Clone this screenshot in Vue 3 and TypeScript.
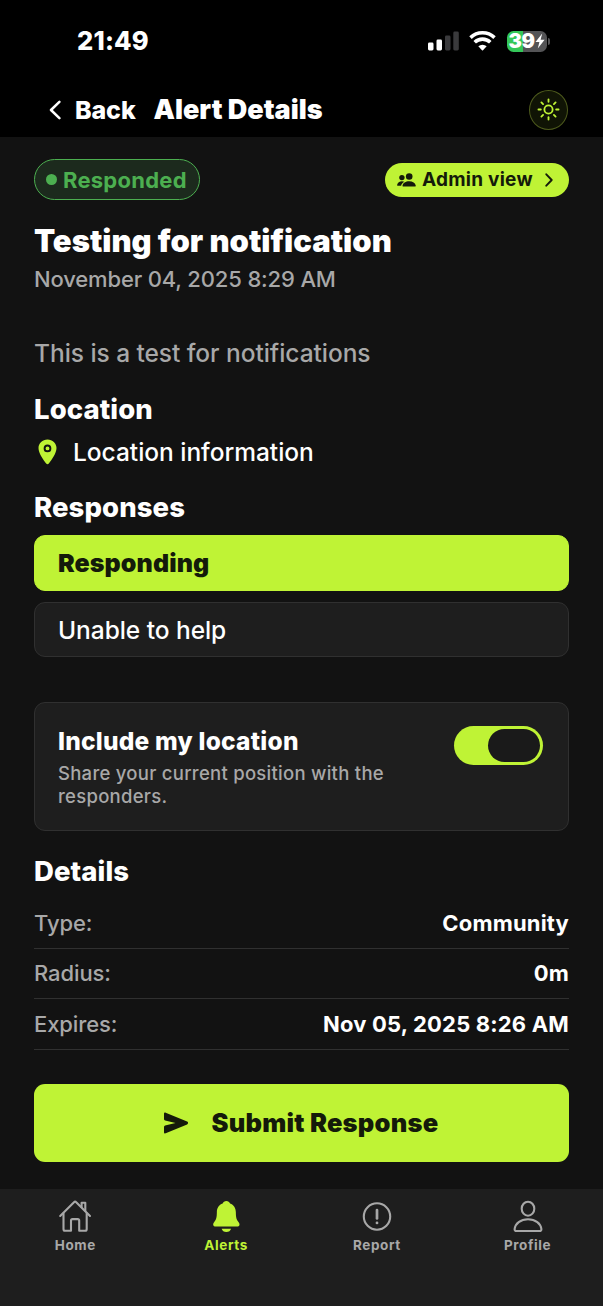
<script setup lang="ts">
import { ref } from 'vue'

interface Detail {
  label: string
  value: string
}

const details: Detail[] = [
  { label: 'Type:', value: 'Community' },
  { label: 'Radius:', value: '0m' },
  { label: 'Expires:', value: 'Nov 05, 2025 8:26 AM' },
]

const options: string[] = ['Responding', 'Unable to help']
const selected = ref<string>('Responding')
const includeLocation = ref<boolean>(true)

const tabs: string[] = ['Home', 'Alerts', 'Report', 'Profile']
const activeTab = ref<string>('Alerts')

const rays: number[] = [0, 45, 90, 135, 180, 225, 270, 315]
</script>

<template>
  <div class="screen">
    <div class="status">
      <span class="clock">21:49</span>
      <div class="indicators">
        <svg class="signal" viewBox="0 0 31 20">
          <rect x="0" y="11.5" width="5.5" height="8" rx="1.4" fill="#fff" />
          <rect x="8.5" y="8.5" width="5.5" height="11" rx="1.4" fill="#fff" />
          <rect x="17" y="4.5" width="5.5" height="15" rx="1.4" fill="#3a3a3c" />
          <rect x="25.3" y="0.5" width="5.5" height="19" rx="1.4" fill="#3a3a3c" />
        </svg>
        <svg class="wifi" viewBox="0 0 27 20">
          <path d="M1.5 6.6a17.400 17.400 0 0 1 24 0" />
          <path d="M5.7 11.2a11.300 11.300 0 0 1 15.600 0" />
          <path class="wedge" d="M9.300 15.300a6.400 6.400 0 0 1 8.400 0L14 19.300q-.5.5-1 0z" />
        </svg>
        <div class="battery">
          <span class="level">39</span>
          <svg class="bolt" viewBox="0 0 10 16"><path d="M7.200.6L.5 9.100h3.900L2.800 15.400 9.600 6.800H5.600z" /></svg>
        </div>
        <span class="nub"></span>
      </div>
    </div>

    <header class="header">
      <button class="back">
        <svg viewBox="0 0 12 20"><path d="M10.4 1.8L2 10l8.400 8.200" /></svg>
        <span>Back</span>
      </button>
      <h1>Alert Details</h1>
      <button class="theme">
        <svg viewBox="0 0 24 24">
          <circle cx="12" cy="12" r="4.3" />
          <path v-for="r in rays" :key="r" d="M12 1.5v2.500" :transform="`rotate(${r} 12 12)`" />
        </svg>
      </button>
    </header>

    <main class="content">
      <div class="badges">
        <div class="responded"><i></i><span>Responded</span></div>
        <button class="admin">
          <svg class="people" viewBox="0 0 19 14">
            <circle cx="12.2" cy="3.5" r="3.3" />
            <path d="M6 13.6c-.4 0-.6-.4-.5-.8.5-2.8 3.2-4.5 6.7-4.5s6.1 1.7 6.6 4.5c.1.4-.2.8-.6.8z" />
            <circle cx="4.9" cy="4.6" r="2.7" />
            <path d="M7.4 8.7C5.6 9.700 4.400 11 4.100 12.700H.6c-.4 0-.6-.3-.5-.6.4-2.400 2.400-3.900 4.900-3.900.9 0 1.700.2 2.400.5z" />
          </svg>
          <span>Admin view</span>
          <svg class="chevron" viewBox="0 0 8 14"><path d="M1.300 1.300L6.700 7l-5.400 5.700" /></svg>
        </button>
      </div>

      <h2 class="title">Testing for notification</h2>
      <p class="date">November 04, 2025 8:29 AM</p>
      <p class="message">This is a test for notifications</p>

      <h3 class="section loc-head">Location</h3>
      <div class="location">
        <svg viewBox="0 0 19 26">
          <path d="M9.500.5C4.500.5.500 4.300.500 9.100c0 5.200 4.700 11.800 7.700 15.500.7.900 1.900.9 2.600 0 3-3.700 7.700-10.300 7.700-15.500C18.500 4.300 14.500.5 9.500.5z" />
          <circle cx="9.500" cy="9.400" r="2.900" />
        </svg>
        <span>Location information</span>
      </div>

      <h3 class="section resp-head">Responses</h3>
      <div class="options">
        <button
          v-for="o in options"
          :key="o"
          class="option"
          :class="{ chosen: o === selected }"
          @click="selected = o"
        ><span>{{ o }}</span></button>
      </div>

      <div class="share">
        <div class="share-text">
          <strong>Include my location</strong>
          <p>Share your current position with the responders.</p>
        </div>
        <button class="switch" :class="{ on: includeLocation }" @click="includeLocation = !includeLocation"><i></i></button>
      </div>

      <h3 class="section det-head">Details</h3>
      <dl class="details">
        <div v-for="d in details" :key="d.label" class="row">
          <dt>{{ d.label }}</dt>
          <dd>{{ d.value }}</dd>
        </div>
      </dl>

      <button class="submit">
        <svg viewBox="0 0 26 22">
          <path d="M1 1.800C1 .8 1.800.3 2.700.7l21.400 8.900c1.300.6 1.300 2.200 0 2.800L2.700 21.300C1.800 21.700 1 21.200 1 20.200v-5.300c0-.7.400-1.200 1.100-1.400L12.500 11 2.100 8.500C1.400 8.300 1 7.800 1 7.100z" />
        </svg>
        <span>Submit Response</span>
      </button>
    </main>

    <nav class="tabs">
      <button v-for="t in tabs" :key="t" class="tab" :class="{ active: t === activeTab }" @click="activeTab = t">
        <svg v-if="t === 'Home'" viewBox="0 0 34 34">
          <path d="M2.200 17L16 3.200c.7-.7 1.500-.7 2.200 0L32 17" />
          <path d="M5.500 14.500v15.700c0 .9.600 1.500 1.500 1.500h6V21.600c0-.9.600-1.500 1.500-1.500h5.200c.9 0 1.500.6 1.500 1.500v10.100h6c.9 0 1.500-.6 1.500-1.500V14.500" />
          <path d="M23.600 8.200V3.700h3.700v8" />
        </svg>
        <svg v-else-if="t === 'Alerts'" class="solid" viewBox="0 0 34 34">
          <g transform="translate(1.200 0) scale(0.950 1)">
            <path d="M17 2c-1.900 0-3.300 1.100-3.900 2.500C9.200 5.700 7 9 7 13.200c0 5.300-.7 7.400-2.700 9.700-.9 1.100-1.300 2-1.100 3 .3 1.100 1.300 1.700 2.600 1.700h22.400c1.300 0 2.300-.6 2.600-1.700.2-1-.2-1.900-1.100-3-2-2.300-2.700-4.400-2.700-9.700 0-4.200-2.200-7.500-6.100-8.700C20.300 3.100 18.900 2 17 2z" />
            <path d="M12 29.700h10c-.6 2-2.500 3.300-5 3.300s-4.400-1.300-5-3.300z" />
          </g>
        </svg>
        <svg v-else-if="t === 'Report'" viewBox="0 0 34 34">
          <circle cx="17" cy="17.500" r="13.200" />
          <path class="mark" d="M17 11v8.500" />
          <circle class="dot" cx="17" cy="23.900" r="1.400" />
        </svg>
        <svg v-else viewBox="0 0 34 34">
          <ellipse cx="17" cy="9.700" rx="6.300" ry="7" />
          <path d="M5.500 32h23c1.300 0 2-.8 1.900-2C29.800 24.600 24.500 20.300 17 20.300S4.200 24.600 3.600 30c-.1 1.200.6 2 1.900 2z" />
        </svg>
        <span>{{ t }}</span>
      </button>
    </nav>
  </div>
</template>

<style>
body {
  margin: 0;
  background: #121212;
}
</style>

<style scoped>
.screen {
  width: 603px;
  height: 1306px;
  display: flex;
  flex-direction: column;
  overflow: hidden;
  background: #121212;
  color: #fff;
  font-family: Inter, "Liberation Sans", sans-serif;
}
.screen * {
  box-sizing: border-box;
}
.screen svg {
  display: block;
  flex: none;
}
button {
  font: inherit;
  color: inherit;
  background: none;
  border: 0;
  padding: 0;
  margin: 0;
}
h1, h2, h3, p, dl, dd, dt {
  margin: 0;
}
span, h1, h2, h3, strong, dt, dd {
  white-space: nowrap;
}

.status {
  height: 82px;
  flex: none;
  display: flex;
  justify-content: space-between;
  align-items: center;
  padding: 0 53px 0 77px;
  background: #000;
}
.clock {
  padding-bottom: 2px;
  font-size: 25.500px;
  font-weight: 800;
  letter-spacing: 0.200px;
}
.indicators {
  display: flex;
  align-items: center;
}
.signal {
  width: 31px;
  height: 20px;
}
.wifi {
  width: 27px;
  height: 20px;
  margin-left: 10px;
  fill: none;
  stroke: #fff;
  stroke-width: 3.6;
}
.wifi .wedge {
  fill: #fff;
  stroke: none;
}
.battery {
  width: 40px;
  height: 21px;
  margin-left: 10.500px;
  display: flex;
  align-items: center;
  padding-left: 2px;
  border-radius: 6.500px;
  background: linear-gradient(90deg, #34c759 39%, #545456 39%);
}
.level {
  font-size: 20px;
  line-height: 21px;
  font-weight: 900;
  letter-spacing: -0.400px;
}
.bolt {
  width: 10px;
  height: 16px;
  fill: #fff;
}
.nub {
  width: 2.500px;
  height: 7px;
  margin-left: 1px;
  border-radius: 0 3px 3px 0;
  background: #545456;
}

.header {
  height: 55px;
  flex: none;
  display: flex;
  align-items: center;
  padding: 0 35px 0 49px;
  background: #000;
}
.back {
  width: 87px;
  display: flex;
  align-items: center;
  font-size: 25px;
  font-weight: 800;
  letter-spacing: -0.100px;
}
.back svg {
  width: 12px;
  height: 20px;
  margin-right: 14px;
  fill: none;
  stroke: #fff;
  stroke-width: 2.500;
  stroke-linecap: round;
  stroke-linejoin: round;
}
.header h1 {
  margin-left: 17.500px;
  font-size: 27px;
  font-weight: 900;
}
.theme {
  width: 39px;
  height: 40px;
  margin-left: auto;
  display: grid;
  place-items: center;
  border: 1px solid #4d5a1c;
  border-radius: 50%;
  background: #101405;
}
.theme svg {
  width: 23px;
  height: 23px;
  fill: none;
  stroke: #bff335;
  stroke-width: 1.900;
  stroke-linecap: round;
}

.content {
  flex: 1;
  display: flex;
  flex-direction: column;
  padding: 22px 34px 0;
}
.badges {
  height: 41px;
  display: flex;
  justify-content: space-between;
  align-items: center;
}
.responded {
  width: 166px;
  height: 41px;
  display: flex;
  align-items: center;
  padding-left: 11px;
  border: 1.500px solid #4caf50;
  border-radius: 21px;
  background: #1c2a1d;
  color: #4caf50;
  font-size: 22px;
  font-weight: 700;
  letter-spacing: 0.250px;
}
.responded i {
  width: 11px;
  height: 11px;
  margin-right: 6px;
  border-radius: 50%;
  background: #4caf50;
}
.admin {
  width: 184px;
  height: 34px;
  display: flex;
  align-items: center;
  padding-left: 12px;
  border-radius: 17px;
  background: #bff335;
  color: #141a0a;
  font-size: 19px;
  font-weight: 700;
  letter-spacing: 0.250px;
}
.people {
  width: 19px;
  height: 14px;
  margin-right: 6px;
  fill: #141a0a;
}
.chevron {
  width: 8px;
  height: 14px;
  margin-left: 12px;
  fill: none;
  stroke: #141a0a;
  stroke-width: 1.900;
  stroke-linecap: round;
  stroke-linejoin: round;
}
.title {
  margin-top: 21px;
  font-size: 31px;
  line-height: 40px;
  font-weight: 900;
}
.date {
  margin-top: 3px;
  font-size: 22px;
  line-height: 30px;
  font-weight: 500;
  letter-spacing: -0.150px;
  color: #a8a8a8;
}
.message {
  margin-top: 44px;
  font-size: 24.500px;
  line-height: 30px;
  font-weight: 500;
  letter-spacing: -0.050px;
  color: #a8a8a8;
}
.section {
  height: 36px;
  font-size: 27.500px;
  line-height: 36px;
  font-weight: 800;
  letter-spacing: 0.080px;
}
.loc-head {
  margin-top: 23px;
}
.location {
  height: 32px;
  margin-top: 9px;
  display: flex;
  align-items: center;
  padding-left: 4px;
  font-size: 24.500px;
  font-weight: 500;
  letter-spacing: -0.030px;
}
.location svg {
  width: 19px;
  height: 26px;
  margin-right: 16px;
  fill: #bff335;
}
.location circle {
  stroke: #121212;
  stroke-width: 1.900;
}
.resp-head {
  margin-top: 21px;
}
.options {
  margin-top: 10px;
  display: flex;
  flex-direction: column;
  gap: 11px;
}
.option {
  height: 55.500px;
  display: flex;
  align-items: center;
  padding-left: 23px;
  border: 1px solid #303030;
  border-radius: 11px;
  background: #1e1e1e;
  font-size: 24.500px;
  font-weight: 500;
  letter-spacing: -0.050px;
}
.option:not(.chosen) {
  padding-top: 1px;
}
.option.chosen {
  border-color: #bff335;
  background: #bff335;
  color: #141a0a;
  font-size: 25px;
  font-weight: 900;
  letter-spacing: 0.100px;
}
.share {
  height: 129px;
  margin-top: 45px;
  display: flex;
  justify-content: space-between;
  align-items: flex-start;
  padding: 23px 25px 0 23px;
  border: 1px solid #303030;
  border-radius: 11px;
  background: #1e1e1e;
}
.share-text {
  width: 350px;
  margin-top: -1px;
}
.share strong {
  display: block;
  font-size: 24.500px;
  line-height: 32px;
  font-weight: 800;
  letter-spacing: 0.220px;
}
.share p {
  margin-top: 5px;
  font-size: 18.500px;
  line-height: 22.500px;
  font-weight: 500;
  letter-spacing: 0.270px;
  color: #a8a8a8;
}
.switch {
  width: 89px;
  height: 39px;
  display: flex;
  align-items: center;
  padding: 3px;
  border-radius: 20px;
  background: #3a3a3c;
}
.switch.on {
  justify-content: flex-end;
  background: #bff335;
}
.switch i {
  width: 52px;
  height: 33px;
  border-radius: 17px;
  background: #1a1a1a;
}
.det-head {
  margin-top: 21.500px;
}
.details {
  margin-top: 9.500px;
}
.row {
  height: 50.500px;
  display: flex;
  justify-content: space-between;
  align-items: center;
  border-bottom: 1px solid #303030;
  font-size: 22px;
}
.row dt {
  color: #a8a8a8;
  font-weight: 500;
  letter-spacing: -0.100px;
}
.row dd {
  font-weight: 700;
  letter-spacing: 0.180px;
}
.submit {
  height: 78px;
  margin-top: 34px;
  display: flex;
  align-items: center;
  padding-left: 129px;
  border-radius: 11px;
  background: #bff335;
  color: #141a0a;
  font-size: 25.500px;
  font-weight: 900;
  letter-spacing: 0.220px;
}
.submit svg {
  width: 26px;
  height: 22px;
  margin-right: 22.500px;
  fill: #141a0a;
}

.tabs {
  height: 117px;
  flex: none;
  display: flex;
  background: #1e1e1e;
}
.tab {
  flex: 1;
  display: flex;
  flex-direction: column;
  align-items: center;
  padding-top: 10px;
  color: #a8a8a8;
  font-size: 13.500px;
  font-weight: 700;
  letter-spacing: 0.600px;
}
.tab.active {
  color: #bff335;
}
.tab svg {
  width: 34px;
  height: 34px;
  fill: none;
  stroke: currentColor;
  stroke-width: 2.100;
  stroke-linecap: round;
  stroke-linejoin: round;
}
.tab svg.solid {
  fill: currentColor;
  stroke: none;
}
.tab .mark {
  stroke-width: 2.700;
}
.tab .dot {
  fill: currentColor;
  stroke: none;
}
.tab span {
  margin-top: 4px;
  line-height: 16px;
}
</style>
